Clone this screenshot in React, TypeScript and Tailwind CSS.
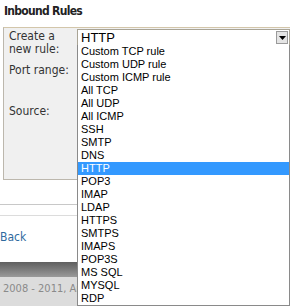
import React from "react";

const items = [
  "Custom TCP rule",
  "Custom UDP rule",
  "Custom ICMP rule",
  "All TCP",
  "All UDP",
  "All ICMP",
  "SSH",
  "SMTP",
  "DNS",
  "HTTP",
  "POP3",
  "IMAP",
  "LDAP",
  "HTTPS",
  "SMTPS",
  "IMAPS",
  "POP3S",
  "MS SQL",
  "MYSQL",
  "RDP",
];

export default function App() {
  return (
    <div className="relative w-[290px] h-[306px] overflow-hidden bg-white font-['DejaVu_Sans',sans-serif] [font-stretch:condensed]">
      <div className="h-[27px] pl-[4px] pt-[4px] text-[12px] leading-[14px] font-bold tracking-[-0.7px] text-[#222]">
        Inbound Rules
      </div>
      <div className="ml-[3px] w-[300px] h-[153px] border border-[#bcb7ad] border-t-[#d3c6aa] bg-[#f0f0f0]">
        <div className="flex">
          <div className="w-[73px] pl-[5px] pt-[2px] text-[12px] leading-[13px] text-[#333]">
            <div>
              Create a
              <br />
              new rule:
            </div>
            <div className="mt-[8px]">Port range:</div>
            <div className="mt-[28px]">Source:</div>
          </div>
          <div className="relative mt-[1px] w-[213px]">
            <div className="flex h-[17px] items-center border border-[#a9a495] bg-white font-['Liberation_Sans',Arial,sans-serif] [font-stretch:normal]">
              <span className="flex-1 pl-[3px] text-[13px] leading-[15px] text-black">HTTP</span>
              <div className="mr-[1px] flex h-[13px] w-[12px] items-center justify-center border border-[#9a9a9a] bg-[#e4e4e4]">
                <svg width="7" height="4" viewBox="0 0 7 4">
                  <path d="M0 0H7L3.5 4Z" fill="#000" />
                </svg>
              </div>
            </div>
            <div className="absolute left-0 top-[16px] w-[213px] border border-t-0 border-[#8a8a8a] bg-white font-['Liberation_Sans',Arial,sans-serif] [font-stretch:normal]">
              {items.map((it) => (
                <div
                  key={it}
                  className={
                    it === "HTTP"
                      ? "h-[13px] pl-[3px] text-[11px] leading-[13px] bg-[#3399ff] text-white"
                      : "h-[13px] pl-[3px] text-[11px] leading-[13px] text-black"
                  }
                >
                  {it}
                </div>
              ))}
            </div>
          </div>
        </div>
      </div>
      <div className="mt-[24px] h-px w-full bg-[#c8c8c8]" />
      <div className="mt-[10px] h-px w-full bg-[#dcdcdc]" />
      <div className="mt-[14px] pl-0 text-[12px] leading-[14px] text-[#2f6a9e]">Back</div>
      <div className="mt-[18px] h-[15px] w-full bg-gradient-to-b from-[#5f5f5f] to-[#9a9a9a]" />
      <div className="h-[40px] bg-[#dcdcdc] pl-[3px] pt-[5px]">
        <div className="w-[74px] overflow-hidden whitespace-nowrap text-[11px] leading-[13px] text-[#8a8a8a]">
          2008 - 2011, Amazon Web Services LLC
        </div>
      </div>
    </div>
  );
}
